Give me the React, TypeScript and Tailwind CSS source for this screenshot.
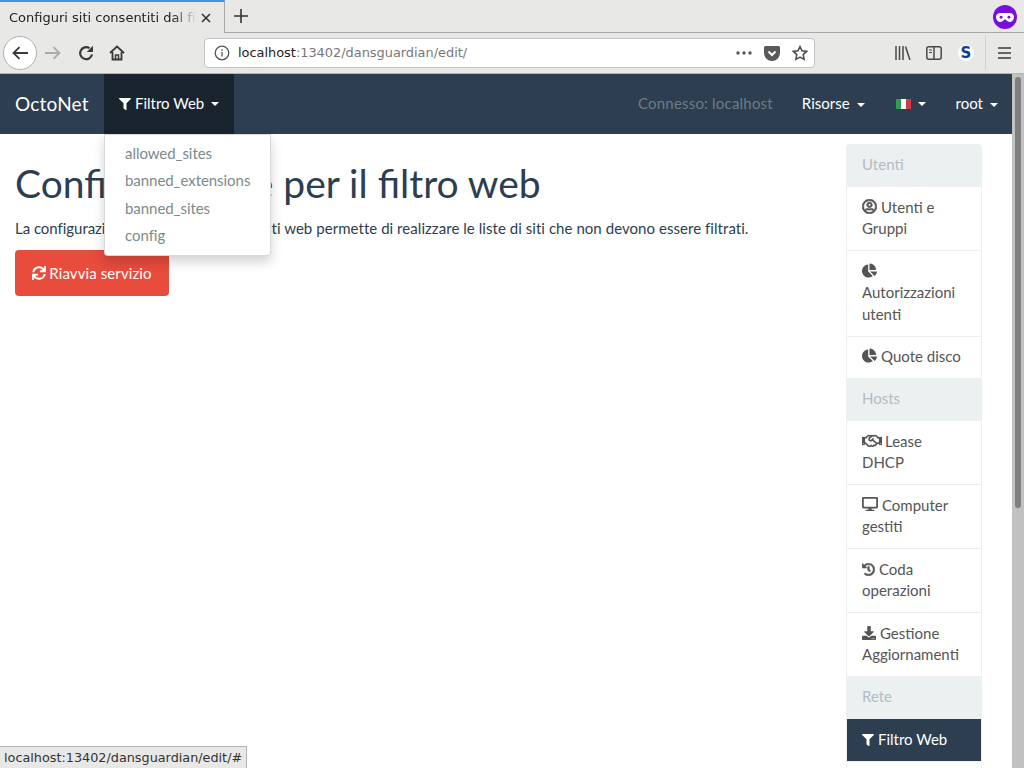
import { FaChartPie, FaDesktop, FaDownload, FaFilter, FaHistory, FaRegHandshake, FaRegUserCircle, FaSync } from "react-icons/fa";

const lato = "font-['Lato',sans-serif]";

function Header({ label }: { label: string }) {
  return <div className="h-[42.43px] bg-[#ecf0f1] px-4 py-[10px] text-[#b4bcc2]">{label}</div>;
}

function Item({ children, active }: { children: React.ReactNode; active?: boolean }) {
  return (
    <div className={active
      ? "border border-[#ecf0f1] bg-[#2c3e50] bg-clip-padding px-[15px] py-[10px] text-white"
      : "border-x border-t border-[#ecf0f1] px-[15px] pt-[9.5px] pb-[10.5px] text-[#555]"}>
      {children}
    </div>
  );
}

function Caret() {
  return <span className="ml-[7px] inline-block h-0 w-0 border-x-[4px] border-t-[4px] border-x-transparent border-t-white align-middle" />;
}

function Browser() {
  return (
    <div className="h-[74px] shrink-0 bg-[#e8e8e7] font-['DejaVu_Sans',sans-serif] text-[#232323]">
      <div className="flex h-[33px] border-b border-[#a8a8a8]">
        <div className="-mb-px flex h-[33px] w-[225px] items-center border-t-2 border-r border-t-[#4a90d9] border-r-[#a8a8a8] bg-[#e8e8e7] pl-[9px]">
          <span className="w-[188px] overflow-hidden text-[13px] whitespace-nowrap [mask-image:linear-gradient(to_left,transparent,black_24px)]">Configuri siti consentiti dal filtro web</span>
          <svg className="ml-[4px]" width="10" height="10" viewBox="0 0 10 10"><path d="M1 1l8 8M9 1l-8 8" stroke="#333" strokeWidth="1.6" /></svg>
        </div>
        <svg className="ml-[9px] mt-[9px]" width="14" height="14" viewBox="0 0 14 14"><path d="M7 0v14M0 7h14" stroke="#333" strokeWidth="1.6" /></svg>
        <div className="ml-auto mr-[7px] mt-[5px] flex h-6 w-6 items-center justify-center rounded-full bg-[#7a10d8]">
          <svg width="18" height="9" viewBox="0 0 16 8"><path d="M4 0h8c2.500 0 4 1.500 4 3.500S14.500 8 12 8c-2 0-3-2.500-4-2.500S6 8 4 8C1.500 8 0 5.500 0 3.500S1.500 0 4 0z" fill="#fff" /><circle cx="4.500" cy="3.800" r="1.300" fill="#7a10d8" /><circle cx="11.500" cy="3.800" r="1.300" fill="#7a10d8" /></svg>
        </div>
      </div>
      <div className="flex h-[41px] items-center border-b border-[#b5b5b5]">
        <div className="ml-[3px] flex h-[34px] w-[34px] items-center justify-center rounded-full border border-[#b0b0b0] bg-white">
          <svg width="16" height="14" viewBox="0 0 16 14" fill="none" stroke="#3a3a3a" strokeWidth="1.800"><path d="M16 7H2M7.500 1.200L1.500 7l6 5.800" /></svg>
        </div>
        <svg className="ml-[8px]" width="16" height="14" viewBox="0 0 16 14" fill="none" stroke="#aaa" strokeWidth="1.800"><path d="M0 7h14M8.500 1.200l6 5.800-6 5.800" /></svg>
        <svg className="ml-[17px]" width="16" height="16" viewBox="0 0 16 16" fill="none" stroke="#3a3a3a" strokeWidth="2.200"><path d="M14 9.500A6 6 0 1 1 11.500 3.200" /><path d="M15 .8v6.200H8.800z" fill="#3a3a3a" stroke="none" /></svg>
        <svg className="ml-[15px]" width="16" height="16" viewBox="0 0 16 16" fill="none" stroke="#3a3a3a" strokeWidth="1.800"><path d="M1 8l7-6.500L15 8M3.500 7v7.500h9V7" /><path d="M6.500 15V10h3v5" strokeWidth="1.500" /></svg>
        <div className="ml-[79px] flex h-[30px] w-[611px] items-center rounded-[4px] border border-[#c2c2c2] bg-white text-[12.9px]">
          <svg className="ml-[9px]" width="16" height="16" viewBox="0 0 16 16" fill="none" stroke="#555" strokeWidth="1.300"><circle cx="8" cy="8" r="6.800" /><path d="M8 7v4.500M8 4.200v1.600" /></svg>
          <span className="ml-[8px] text-[#222]">localhost<span className="text-[#777]">:13402/dansguardian/edit/</span></span>
          <svg className="ml-auto" width="16" height="4" viewBox="0 0 16 4" fill="#555"><circle cx="2" cy="2" r="1.700" /><circle cx="8" cy="2" r="1.700" /><circle cx="14" cy="2" r="1.700" /></svg>
          <svg className="ml-[12px]" width="16" height="15" viewBox="0 0 16 15"><path d="M1.500 0h13A1.500 1.500 0 0 1 16 1.500V7A8 8 0 0 1 0 7V1.500A1.500 1.500 0 0 1 1.500 0z" fill="#5a5a5a" /><path d="M4.500 5.500L8 9l3.500-3.500" fill="none" stroke="#fff" strokeWidth="2" /></svg>
          <svg className="ml-[12px] mr-[6px]" width="16" height="16" viewBox="0 0 16 16" fill="none" stroke="#4a4a4a" strokeWidth="1.500"><path d="M8 1.500l2 4.300 4.700.6-3.500 3.200.9 4.700L8 12l-4.100 2.300.9-4.700-3.500-3.200 4.700-.6z" /></svg>
        </div>
        <svg className="ml-[80px]" width="16" height="14" viewBox="0 0 16 14" fill="none" stroke="#4a4a4a" strokeWidth="1.500"><path d="M1 0v14M4.500 0v14M8 0v14M10.500.5l4.500 13.500" /></svg>
        <svg className="ml-[15px]" width="16" height="14" viewBox="0 0 16 14" fill="none" stroke="#4a4a4a" strokeWidth="1.500"><rect x=".8" y=".8" width="14.400" height="12.400" rx="2" /><path d="M8 1v12" /><path d="M3 4h3M3 6.500h3" strokeWidth="1" /></svg>
        <span className="ml-[16px] flex h-[16px] w-[16px] items-center justify-center rounded-full bg-white text-[15px] font-bold text-[#0b3d91]">S</span>
        <div className="ml-[11px] h-[34px] w-px bg-[#cfcfcf]" />
        <svg className="ml-[12px]" width="13" height="12" viewBox="0 0 13 12" stroke="#3a3a3a" strokeWidth="1.500"><path d="M0 1h13M0 6h13M0 11h13" /></svg>
      </div>
    </div>
  );
}

export default function App() {
  return (
    <div className="relative flex h-screen flex-col overflow-hidden bg-white">
      <Browser />
      <div className="flex min-h-0 flex-1">
        <div className={`relative flex min-w-0 flex-1 flex-col text-[15px] leading-[21.43px] ${lato}`}>
          <nav className="flex h-[60px] shrink-0 items-center bg-[#2c3e50] text-white">
            <span className="ml-[15px] w-[74px] text-[19px] tracking-[0.2px] whitespace-nowrap">OctoNet</span>
            <div className="ml-[15px] flex h-full w-[130px] items-center bg-[#1a242f] pl-[15px]">
              <FaFilter className="mr-[4px] text-[12px]" />Filtro Web<Caret />
            </div>
            <span className="ml-auto tracking-[0.2px] text-[#6f7b87]">Connesso: localhost</span>
            <span className="ml-[29px]">Risorse<Caret /></span>
            <span className="ml-[31px] flex items-center">
              <span className="flex h-[10px] w-[15px]">
                <span className="flex-1 bg-[#2f9e52]" />
                <span className="flex-1 bg-white" />
                <span className="flex-1 bg-[#d43a44]" />
              </span>
              <Caret />
            </span>
            <span className="ml-[30px] mr-[14px]">root<Caret /></span>
          </nav>
          <div className="flex min-h-0 flex-1">
            <main className="min-w-0 flex-1 pl-[15px] text-[#2c3e50]">
              <h1 className="mt-[24px] text-[39px] leading-[50px]">Configurazione per il filtro web</h1>
              <p className="mt-[10px]"><span className="tracking-[-0.04px]">La configurazione </span><span className="tracking-[0.05px]">del filtro dei contenuti web permette di realizzare le liste di siti che non devono essere filtrati.</span></p>
              <button className="mt-[11px] flex h-[46px] w-[154px] items-center justify-center rounded-[4px] bg-[#e74c3c] tracking-[0.1px] text-white">
                <FaSync className="mr-[3px] text-[14px]" />Riavvia servizio
              </button>
            </main>
            <aside className="mr-[30px] mt-[10px] w-[136px] shrink-0">
              <div className="overflow-hidden rounded-t-[4px]"><Header label="Utenti" /></div>
              <Item><FaRegUserCircle className="mr-[4px] inline stroke-[24] align-[-1px] text-[15px]" />Utenti e Gruppi</Item>
              <Item><FaChartPie className="mr-[4px] inline align-[-1px] text-[15px]" /> Autorizzazioni utenti</Item>
              <Item><FaChartPie className="mr-[4px] inline align-[-1px] text-[15px]" />Quote disco</Item>
              <Header label="Hosts" />
              <Item><FaRegHandshake className="mr-[3px] inline h-[16px] w-[20px] stroke-[6] align-[-2px]" />Lease DHCP</Item>
              <Item><FaDesktop className="mr-[4px] inline align-[-1px] text-[16px]" />Computer gestiti</Item>
              <Item><FaHistory className="mr-[4px] inline stroke-[20] align-[-1px] text-[13px]" />Coda operazioni</Item>
              <Item><FaDownload className="mr-[4px] inline align-[-1px] text-[14px]" />Gestione Aggiornamenti</Item>
              <Header label="Rete" />
              <Item active><FaFilter className="mr-[4px] inline align-[-1px] text-[12px]" />Filtro Web</Item>
              <div className="h-[12px] border-x border-[#ecf0f1]" />
            </aside>
          </div>
          <div className="absolute left-[104px] top-[60px] z-10 h-[122px] w-[167px] rounded-b-[4px] border border-black/15 bg-white py-[5px] tracking-[-0.05px] text-[#7b8a8b] shadow-[0_6px_12px_rgba(0,0,0,0.175)]">
            {["allowed_sites", "banned_extensions", "banned_sites", "config"].map((name) => (
              <div key={name} className="px-5 py-[3px]">{name}</div>
            ))}
          </div>
        </div>
        <div className="w-[12px] shrink-0 bg-[#c1c1c1] pl-[3px] pt-[3px]">
          <div className="h-[431px] w-[6px] rounded-full bg-[#7f7f7f]" />
        </div>
      </div>
      <div className="absolute bottom-0 left-0 z-20 h-[22px] border-t border-r border-[#b5b5b5] bg-[#e8e8e7] px-[4px] py-[2px] font-['DejaVu_Sans',sans-serif] text-[12.8px] leading-[17px] text-[#333]">localhost:13402/dansguardian/edit/#</div>
    </div>
  );
}
